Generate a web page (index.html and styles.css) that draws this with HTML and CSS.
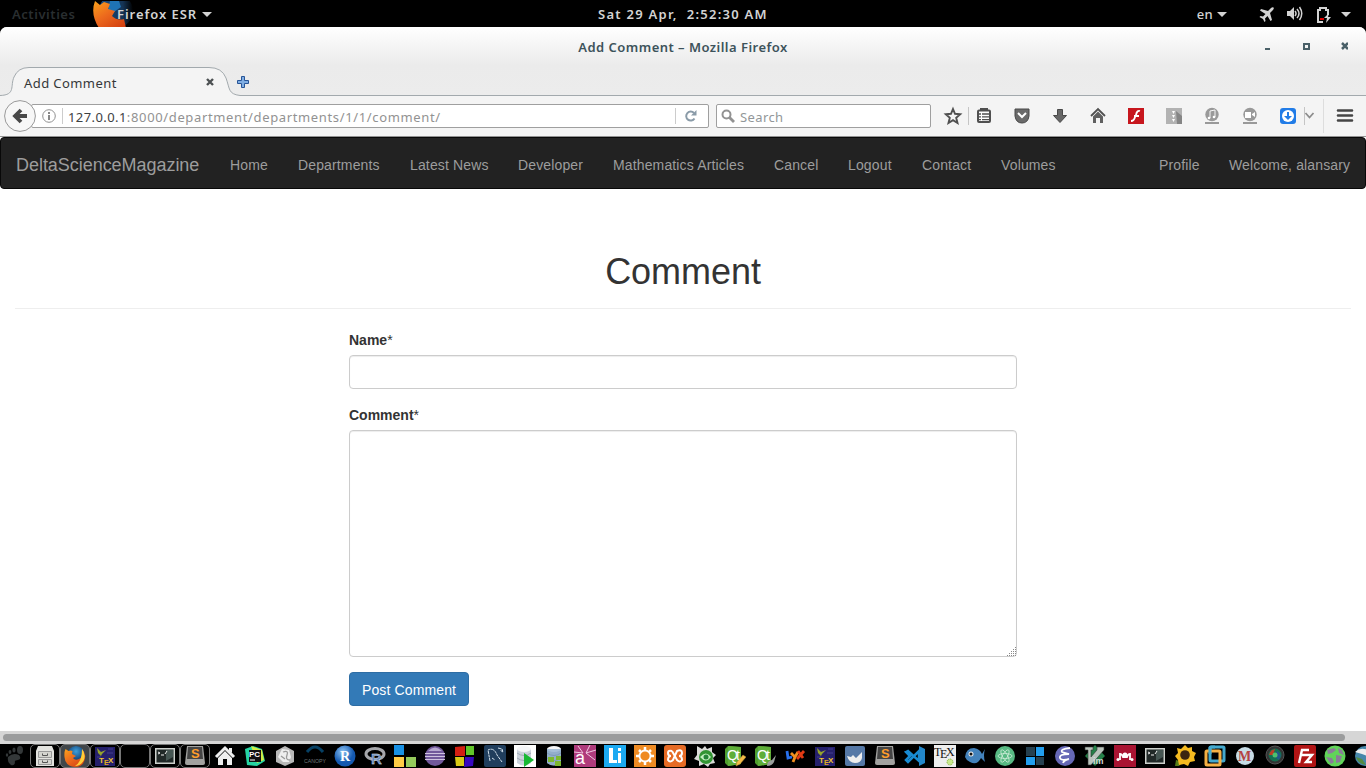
FILE: index.html
```html
<!DOCTYPE html>
<html lang="en">
<head>
<meta charset="utf-8">
<title>Add Comment</title>
<link rel="stylesheet" href="styles.css">
</head>
<body>
<svg class="defs" aria-hidden="true">
  <defs>
    <radialGradient id="ball" cx=".4" cy=".3"><stop offset="0" stop-color="#8fc5f5"/><stop offset="1" stop-color="#1459b0"/></radialGradient>
    <radialGradient id="globe" cx=".5" cy=".3"><stop offset="0" stop-color="#3d9fda"/><stop offset="1" stop-color="#123f75"/></radialGradient>
    <linearGradient id="fox" x2=".8" y2="1"><stop offset="0" stop-color="#f9a21b"/><stop offset=".5" stop-color="#ed6a1d"/><stop offset="1" stop-color="#d44212"/></linearGradient>
    <linearGradient id="fade"><stop offset="0" stop-color="#174c83"/><stop offset=".7" stop-color="#153455"/><stop offset="1" stop-color="#000"/></linearGradient>
    <symbol id="firefox" viewBox="0 0 22 22"><circle cx="12" cy="10" r="9" fill="url(#globe)"/><path d="M1.500 4l3 2q2-1 4 0L8 9l4 2-3 2q2 3 6 1 5-3 3-10 4 4 3 9-1 9-10 9Q1 21 .500 12q-.5-5 1-8z" fill="url(#fox)"/><path d="M18 4q4 5 2 11-3 6-9 6 7-4 7-17z" fill="#ffce38"/></symbol>
    <symbol id="tex" viewBox="0 0 22 22"><path fill="#25206c" d="M1 2h20v19H1z"/><path d="M3 3l4 4 5-2-4 4-1 2-3-3z" fill="#95a42c"/><path d="M14 4h5M3 12h4m6-4h6" stroke="#443d91"/><text x="5" y="18" class="glyph" font-size="8" fill="#f0c72d">T</text><text x="10" y="20" class="glyph" font-size="7" fill="#e4ad21">E</text><text x="14" y="18" class="glyph" font-size="8" fill="#f0c72d">X</text></symbol>
    <symbol id="terminal" viewBox="0 0 22 22"><path d="M1 3h20v16H1z" fill="#ccd0cc"/><path d="M2.500 4.500h17v13h-17z" fill="#202827"/><path d="M12 5h7v7l-7 4z" fill="#455552"/><path d="M4 7l2 1-2 1m3 1h3m1-1l2-3" fill="none" stroke="#eee"/></symbol>
    <symbol id="sublime" viewBox="0 0 22 22"><path d="M3 1h16l2 17q0 2-2 2H3q-2 0-2-2z" fill="#a2a2a0"/><path d="M4 2h14l1 12H3z" fill="#444"/><text x="7" y="13" class="glyph" font-size="13" fill="#ff9c2b">S</text></symbol>
    <symbol id="database" viewBox="0 0 22 22"><path d="M3 4v14q7 5 14 0V4" fill="#ccd3dc"/><ellipse cx="10" cy="4" rx="7" ry="3" fill="#f4f5f7"/><path d="M3 8q7 5 14 0M3 13q7 5 14 0" fill="none" stroke="#a0a9b5"/></symbol>
    <symbol id="qt" viewBox="0 0 22 22"><path d="M4 1l13 1v17L4 21l-3-3V4z" fill="#4f9e2d"/><path d="M4 1l13 1v17L4 21z" fill="#5fae39"/><text x="3" y="15" class="glyph thin" font-size="14" textLength="13" fill="#fff">Qt</text></symbol>
  </defs>
</svg>

<header class="desktop-bar">
  <div class="desktop-left">
    <span class="activities">Activities</span>
    <svg class="app-fox" viewBox="0 0 40 27"><circle cx="23" cy="10" r="17" fill="url(#fade)"/><path d="M17 0h9l2 6-7 5-6-2z" fill="#1f73b4"/><path d="M2 0l5 4 4-3 6 2-2 5 7 2-3 5q5 5 12 3l2 9H6Q-3 13 2 0z" fill="url(#fox)"/></svg>
    <span class="app-name">Firefox ESR</span><i class="caret"></i>
  </div>
  <div class="clock">Sat 29 Apr,&nbsp; 2:52:30 AM</div>
  <div class="desktop-right">
    <span class="lang">en</span><i class="caret"></i>
    <svg class="plane" width="16" height="16" viewBox="0 0 16 16" fill="#d3d3d3"><path d="M14.500 1.500q-1-1-3 1L9 5 2 3 1 4.500 6.500 8 4 10.500l-2.500-.5-1 1L4 13l1.500 3 1-1-.5-2.500L8.500 10l3 5L13 14l-2-7 2.500-2.500q2-2 1-3z"/></svg>
    <svg class="volume" width="17" height="16" viewBox="0 0 17 16" fill="none" stroke="#d3d3d3" stroke-width="1.500"><path d="M1 5h3l4-4v13l-4-4H1z" fill="#d3d3d3" stroke="none"/><path d="M9 5q2 2.500 0 5M11 3q4 4.500 0 9M13.500 1q4.500 6.500 0 13"/></svg>
    <svg class="battery" width="15" height="17" viewBox="0 0 15 17"><path d="M6 16H1V4h2V2h6v2h2v5" fill="none" stroke="#d3d3d3" stroke-width="2"/><path d="M3 12h4v2H3z" fill="#d00"/><path d="M12 7l-5 5h3l-1 5 5-6h-3z" fill="#d3d3d3"/></svg>
    <i class="caret"></i>
  </div>
</header>

<section class="browser">
  <div class="chrome-top">
    <div class="titlebar">
      <span class="window-title">Add Comment – Mozilla Firefox</span>
      <svg class="window-controls" width="84" height="10" viewBox="0 0 84 10"><path d="M1 6h5v2H1z" fill="#4a6068"/><path d="M40 2h5v5h-5z" fill="none" stroke="#4a6068" stroke-width="2"/><path d="M78 1l6 6m0-6l-6 6" stroke="#4a6068" stroke-width="2.500"/></svg>
    </div>
    <div class="tabs">
      <svg class="tab-shape" width="1366" height="30" viewBox="0 0 1366 30"><path d="M0 29.500C16 29 10 20 14 11Q18 1.500 29 1.500H209Q222 1.500 226 12C230 23 228 28 240 29.500V30H0z" fill="#f4f4f4"/><path d="M0 29.500C16 29 10 20 14 11Q18 1.500 29 1.500H209Q222 1.500 226 12C230 23 228 28 240 29.500H1366" fill="none" stroke="#a2a9ad"/></svg>
      <span class="tab-label">Add Comment</span>
      <svg class="tab-close" width="8" height="8" viewBox="0 0 8 8"><path d="M1 1l6 6m0-6L1 7" stroke="#4c5052" stroke-width="2.400"/></svg>
      <svg class="tab-new" width="12" height="12" viewBox="0 0 12 12"><path d="M4.500.5h3v4h4v3h-4v4h-3v-4h-4v-3h4z" fill="#80aee3" stroke="#285597"/></svg>
    </div>
  </div>

  <div class="toolbar">
    <svg class="back" width="32" height="32" viewBox="0 0 32 32"><circle cx="16" cy="16" r="15.400" fill="#f7f7f7" stroke="#999"/><path d="M17 10l-6 6 6 6M11 16h12" fill="none" stroke="#484848" stroke-width="3.800"/></svg>
    <div class="address">
      <svg width="14" height="14" viewBox="0 0 14 14"><circle cx="7" cy="7" r="6.300" fill="none" stroke="#919191"/><path d="M6 3h2v2H6zm0 3h2v5H6z" fill="#888"/></svg>
      <i class="address-rule"></i><span class="url"><b>127.0.0.1</b>:8000/department/departments/1/1/comment/</span>
      <i class="address-rule"></i><svg class="reload" width="12" height="12" viewBox="0 0 12 12"><path d="M9.500 8.500A4.500 4.500 0 1 1 9 3" fill="none" stroke="#8a9ba8" stroke-width="2"/><path d="M6 5.500h5.500V0z" fill="#8a9ba8"/></svg>
    </div>
    <div class="search"><svg width="15" height="15" viewBox="0 0 15 15"><circle cx="5.500" cy="5.500" r="4" fill="none" stroke="#929292" stroke-width="2"/><path d="M8 8l5 5" stroke="#929292" stroke-width="2.800"/></svg><span>Search</span></div>
    <svg class="tools" width="435" height="40" viewBox="0 0 435 40">
      <path d="M22 13l2 4.800 5.200.4-4 3.600 1.300 5.200-4.500-2.800-4.500 2.800 1.300-5.200-4-3.600 5.200-.4z" fill="none" stroke="#505050" stroke-width="1.900"/>
      <path d="M37.500 11v18M373.500 11v18" stroke="#c5c5c5"/><path d="M392.500 3v34" stroke="#ddd"/>
      <rect x="47" y="14.500" width="12" height="11.500" rx="1" fill="#fff" stroke="#505050" stroke-width="2"/><path d="M49 12h8v3h-8z" fill="#505050"/><path d="M48 18h2m1 0h7m-10 2.800h2m1 0h7m-10 2.800h2m1 0h7" stroke="#505050" stroke-width="1.300"/>
      <path d="M84 13h14v7q-1 7-7 7t-7-7z" fill="#6a6a6a" stroke="#484848"/><path d="M87 17l4 4 4-4" fill="none" stroke="#fff" stroke-width="2"/>
      <path d="M126.500 13.500h5v6h4l-6.500 7-6.500-7h4z" fill="#666" stroke="#484848"/>
      <path d="M160 20l7-7 7 7" fill="none" stroke="#505050" stroke-width="1.800"/><path d="M162 20.500l5-5 5 5V27h-3v-5h-4v5h-3z" fill="#606060"/>
      <path d="M197 12h16v16h-16z" fill="#c7161d"/><path d="M209 15q-3-1-4 4l-1 2q-1 4-4 4m3-5h5" fill="none" stroke="#fff" stroke-width="1.800"/>
      <path d="M235 12h16v16h-16z" fill="#b2b2b2"/><path d="M245 15l6 5v8h-5z" fill="#858585"/><path d="M241 15h3l-1.500 3zm0 4h3l-1.500 3zm0 4h3l-1.500 3z" fill="#fff"/>
      <g fill="#999"><circle cx="281" cy="18.500" r="6.700"/><circle cx="319" cy="18.500" r="6.700"/><path d="M274 26h14v2h-14zm38 0h14v2h-14z"/></g>
      <path d="M279 22v-7l5-1v7" fill="none" stroke="#f5f5f5"/><circle cx="278" cy="22" r="1.300" fill="#fff"/><circle cx="283" cy="21" r="1.300" fill="#fff"/><path d="M314 16h6v6h-6zm7 2l3-2v5l-3-2z" fill="#fff"/>
      <rect x="349" y="12" width="16" height="16" rx="3" fill="#217ce7"/><circle cx="357" cy="20" r="6" fill="#fff"/><path d="M356 16h2v4h3l-4 4-4-4h3z" fill="#217ce7"/>
      <path d="M374.500 17l4 4.500 4-4.500" fill="none" stroke="#8c8c8c" stroke-width="1.800"/>
      <path d="M407 14.500h14m-14 5h14m-14 5h14" stroke="#454545" stroke-width="2.600" stroke-linecap="round"/>
    </svg>
  </div>

  <nav class="site-nav">
    <a class="brand">DeltaScienceMagazine</a>
    <a class="home">Home</a><a class="departments">Departments</a><a class="news">Latest News</a><a class="developer">Developer</a><a class="articles">Mathematics Articles</a><a class="cancel">Cancel</a><a class="logout">Logout</a><a class="contact">Contact</a><a class="volumes">Volumes</a>
    <a class="profile">Profile</a><a class="welcome">Welcome, alansary</a>
  </nav>

  <main class="page">
    <h1>Comment</h1>
    <form class="comment-form">
      <label for="name"><span>Name</span>*</label>
      <input id="name" type="text">
      <label for="comment"><span class="comment-label">Comment</span>*</label>
      <div class="area-wrap"><textarea id="comment"></textarea><svg class="grip" width="10" height="10" viewBox="0 0 10 10"><path d="M8 0h1v1H8zM6 2h1v1H6zM8 2h1v1H8zM4 4h1v1H4zM6 4h1v1H6zM8 4h1v1H8zM2 6h1v1H2zM4 6h1v1H4zM6 6h1v1H6zM8 6h1v1H8zM0 8h1v1H0zM2 8h1v1H2zM4 8h1v1H4zM6 8h1v1H6zM8 8h1v1H8z" fill="#888"/></svg></div>
      <button type="button">Post Comment</button>
    </form>
  </main>
  <div class="scrollbar"><i></i></div>
</section>

<footer class="taskbar">
  <span><svg viewBox="0 0 22 22" fill="#343839"><path d="M4 12q5-5 11-2 3 4-1 5-4 0-3 3-1 3-4 2-4-3-3-8z"/><ellipse cx="16" cy="5" rx="3" ry="4"/><ellipse cx="10" cy="5" rx="1.600" ry="2.500"/><ellipse cx="6" cy="7" rx="1.400" ry="2"/><ellipse cx="3" cy="10" rx="1.200" ry="1.700"/></svg></span>
  <span class="running"><svg viewBox="0 0 22 22"><path d="M4 1h14l2 5v15H2V6z" fill="#e3e3df"/><path d="M4.500 6.500h13v6h-13zm0 8h13v5h-13z" fill="#d4d4cf" stroke="#999"/><path d="M8.500 8.500v2h5v-2m-5 7v2h5v-2" fill="none" stroke="#555"/></svg></span>
  <span class="running active"><svg><use href="#firefox"/></svg></span>
  <span class="running"><svg><use href="#tex"/></svg></span>
  <span class="running"></span>
  <span class="running"><svg><use href="#terminal"/></svg></span>
  <span class="running"><svg><use href="#sublime"/></svg></span>
  <span><svg viewBox="0 0 22 22"><path d="M2 12l9-9 9 9" fill="none" stroke="#eee" stroke-width="3"/><path d="M4 13l7-7 7 7v7h-5v-6H9v6H4zM15 3h3v5l-3-2z" fill="#eee"/></svg></span>
  <span><svg viewBox="0 0 22 22"><path d="M1 4l8-3 9 3 3 12-8 5-10-1z" fill="#26d4a2"/><path d="M7 1l11 4 2 10-7 3z" fill="#d4ed43"/><path d="M5 5h12v12H5z" fill="#111"/><text x="5" y="12" class="glyph" font-size="8" fill="#fff">PC</text><path d="M6 15h5" stroke="#fff"/></svg></span>
  <span><svg viewBox="0 0 22 22"><path d="M11 1l9 5v11l-9 4-9-4V6z" fill="#b8b8b8"/><path d="M8 4l7 1 2 7-2 5H9l-5-5z" fill="#eee"/><path d="M9 7q6-2 4 3t3 5M7 11l4 3" fill="none" stroke="#999" stroke-width="1.300"/></svg></span>
  <span><svg viewBox="0 0 22 22"><path d="M3 7q8-10 16 0" fill="none" stroke="#064064" stroke-width="3"/><text x="0" y="18" textLength="22" lengthAdjust="spacingAndGlyphs" class="glyph thin" font-size="6" fill="#71777a">CANOPY</text></svg></span>
  <span><svg viewBox="0 0 22 22"><circle cx="11" cy="11" r="10.500" fill="url(#ball)"/><text x="6" y="16" class="serif" font-size="14" font-weight="700" fill="#fff">R</text></svg></span>
  <span><svg viewBox="0 0 22 22"><ellipse cx="11" cy="9" rx="9" ry="5.500" fill="none" stroke="#a6a7ab" stroke-width="3"/><text x="7" y="19" class="glyph" font-size="15" fill="#6689bd" stroke="#eee" stroke-width=".3">R</text></svg></span>
  <span><svg viewBox="0 0 22 22"><path fill="#1791e5" d="M0 0h10v10H0z"/><path fill="#ffcc46" d="M0 12h10v10H0z"/><path fill="#95ca5b" d="M12 12h10v10H12z"/></svg></span>
  <span><svg viewBox="0 0 22 22"><circle cx="11" cy="11" r="10" fill="#72599b"/><path d="M1 8.500h20M1 11.500h20M1 14.500h20" stroke="#cfc2df" stroke-width="1.200"/><path d="M4 6q7-7 14 0z" fill="#b7a8d0"/></svg></span>
  <span><svg viewBox="0 0 22 22"><path d="M1 2l10-1v10H1z" fill="#d31f12"/><path d="M12 1h8v9h-8z" fill="#62c629"/><path d="M1 12h9v9H2z" fill="#d9cb16"/><path d="M11 12h9l-1 9-9 1z" fill="#3808c0"/></svg></span>
  <span><svg viewBox="0 0 22 22"><rect width="22" height="22" rx="2" fill="#203e5d"/><path d="M6 16L4 5q6-3 9 5l5 7M8 13l3 2m3-12l4 1 1 3-3-2" fill="none" stroke="#d4e2ed" stroke-dasharray="3 .6"/></svg></span>
  <span><svg viewBox="0 0 22 22"><path fill="#fff" d="M0 0h22v22H0z"/><use href="#database"/><path d="M10 8l10 7-10 7z" fill="#18b934"/></svg></span>
  <span><svg viewBox="0 0 22 22"><use href="#database"/><path d="M3 4v14q7 5 14 0V4" fill="#5989ba" opacity=".5"/><path d="M4 12h6v5H4zm7 4h6v5h-6zm1-5h5v4h-5z" fill="#7eb830"/></svg></span>
  <span><svg viewBox="0 0 22 22"><path fill="#af3b7c" d="M0 0h22v22H0z"/><text x="1" y="19" class="glyph thin" font-size="18" fill="#fff">a</text><path d="M0 7l9 1-5-7m8 7l4-8m-4 8l10-3m-10 3l9 7" fill="none" stroke="#efc8df"/></svg></span>
  <span><svg viewBox="0 0 22 22"><path fill="#1ba9f1" d="M0 0h22v22H0z"/><path d="M5 3v15h8v-3H9V3zm9 5h3v10h-3zm0-5h3v3h-3z" fill="#fff"/></svg></span>
  <span><svg viewBox="0 0 22 22"><path fill="#ef8b23" d="M0 0h22v22H0z"/><circle cx="11" cy="11" r="5.500" fill="none" stroke="#fff" stroke-width="1.800"/><path d="M11 2v3m0 12v3M2 11h3m12 0h3M5 5l2 2m8 8l2 2M5 17l2-2m8-8l2-2" stroke="#fff" stroke-width="2.500"/></svg></span>
  <span><svg viewBox="0 0 22 22"><rect width="22" height="22" rx="3" fill="#e66b25"/><path d="M8 6Q4 5 4 8q0 3 3 3-3 0-3 4 2 3 5 0l4-9q5-2 5 2 0 3-3 3 3 0 3 4-2 3-5 0L8 6" fill="none" stroke="#fff" stroke-width="2"/></svg></span>
  <span><svg viewBox="0 0 22 22"><path d="M3 1l5 3 3-3 2 3 5-2v5l4 3-3 3 2 5-5 1-2 3-4-3-5 2v-5l-5-2 3-4z" fill="#dadbd8"/><circle cx="12" cy="12" r="7" fill="#329432"/><path d="M6 12q6-7 11 0-5 7-11 0z" fill="#c1eebe"/><circle cx="12" cy="12" r="2.500" fill="#258437"/></svg></span>
  <span><svg viewBox="0 0 22 22"><use href="#qt"/><path d="M12 21l1-4 6-7 3 2-6 7z" fill="#f6bd48" stroke="#b98d39" stroke-width=".5"/></svg></span>
  <span><svg viewBox="0 0 22 22"><use href="#qt"/><path d="M13 21q0-5 5-6l4-5-2 7q-2 4-7 4z" fill="#9b9e9c"/></svg></span>
  <span><svg viewBox="0 0 22 22" fill="none" stroke-width="2.800"><path d="M3 6l1 7 4-1" stroke="#2871ee"/><path d="M7 8l4 4 3-5m-3 5l-2 5" stroke="#f28f20"/><path d="M14 6l5 7m1-7l-7 8" stroke="#e23b14"/></svg></span>
  <span><svg><use href="#tex"/></svg></span>
  <span><svg viewBox="0 0 22 22"><rect x="1" y="1" width="20" height="20" rx="2" fill="#5578a6"/><path d="M3 11l4 1 2-2 3 3 6-6v6q-1 5-7 5-6 0-8-7z" fill="#eee"/></svg></span>
  <span><svg><use href="#sublime"/></svg></span>
  <span><svg viewBox="0 0 22 22"><path d="M2 7l2-1 11 10V6L4 17l-2-2 4-4z" fill="none" stroke="#188bd3" stroke-width="2.500"/><path d="M15 1l6 3v14l-6 3z" fill="#2387ca"/></svg></span>
  <span><svg viewBox="0 0 22 22"><path fill="#eee" d="M0 0h22v22H0z"/><text x="0" y="11" class="serif" font-size="12" fill="#111">T</text><text x="6" y="13" class="serif" font-size="12" fill="#111">E</text><text x="12" y="11" class="serif" font-size="12" fill="#111">X</text><circle cx="16" cy="17" r="3" fill="#c9e88d" stroke="#77a92f" stroke-dasharray="1"/></svg></span>
  <span><svg viewBox="0 0 22 22"><path d="M1 12Q2 3 10 3q6 1 8 6l3-5q-2 6 0 13l-4-4q-4 8-11 4-4-2-5-5z" fill="#4382bb"/><circle cx="7" cy="9" r="2.500" fill="#eee"/><circle cx="7" cy="9" r="1.500" fill="#111"/></svg></span>
  <span><svg viewBox="0 0 22 22"><circle cx="11" cy="11" r="10" fill="#57b982"/><g fill="none" stroke="#d9f0df" stroke-width=".7"><ellipse cx="11" cy="11" rx="7" ry="2.500"/><ellipse cx="11" cy="11" rx="7" ry="2.500" transform="rotate(60 11 11)"/><ellipse cx="11" cy="11" rx="7" ry="2.500" transform="rotate(120 11 11)"/></g></svg></span>
  <span><svg viewBox="0 0 22 22"><path d="M2 2h9v9H2zm10 10h8v8h-8z" fill="#26404f"/><path d="M12 2h8v9h-8zM2 12h9v8H2z" fill="#229eee"/></svg></span>
  <span><svg viewBox="0 0 22 22"><circle cx="11" cy="11" r="10" fill="#6668b6"/><path d="M16 3Q6 4 8 7l7 2q-10 0-9 4 1 3 9 1-5 1-6 4" fill="none" stroke="#fff" stroke-width="1.800"/></svg></span>
  <span><svg viewBox="0 0 22 22"><path d="M11 0l10 11-10 10L1 11z" fill="#258148"/><path d="M1 2h8v3H7v7l6-7V2h7v3L7 20H4V5H1z" fill="#bac4bc" stroke="#333" stroke-width=".6"/><text x="9" y="19" class="glyph" font-size="9" fill="#d6ddd8">im</text></svg></span>
  <span><svg viewBox="0 0 22 22"><path fill="#a91432" d="M0 0h22v22H0z"/><path d="M6 15V9q2 0 3 3h4q1-3 3-3v6" fill="none" stroke="#fff" stroke-width="1.800"/><circle cx="11" cy="10" r="2.500" fill="#fff"/><circle cx="4" cy="14.500" r="1.500" fill="#fff"/><circle cx="18" cy="14.500" r="1.500" fill="#fff"/></svg></span>
  <span><svg><use href="#terminal"/></svg></span>
  <span><svg viewBox="0 0 22 22"><path d="M2 15l7 2-4 4H1z" fill="#557c17"/><path d="M11 0l3 3 4-1v4l4 2-2 4 1 4-5 1-2 4-4-2-5 1-1-5-3-4 3-3-1-5 4 1z" fill="#f5ba20"/><circle cx="11" cy="10" r="4.800" fill="#3d2510"/></svg></span>
  <span><svg viewBox="0 0 22 22" fill="none" stroke-width="3"><rect x="6" y="2" width="14" height="14" rx="1" stroke="#44a9ce"/><rect x="2" y="6" width="14" height="14" rx="1" stroke="#f5b044"/><path d="M6 9V3q0-1 2-1h3" stroke="#44a9ce"/></svg></span>
  <span><svg viewBox="0 0 22 22"><circle cx="11" cy="11" r="9" fill="#c8dce6"/><text x="4" y="16" class="serif" font-size="14" font-weight="700" fill="#b64242">M</text></svg></span>
  <span><svg viewBox="0 0 22 22"><circle cx="11" cy="10" r="9" fill="#333" stroke="#555"/><circle cx="11" cy="10" r="6.500" fill="#146f51"/><path d="M5 10q1-5 6-6l-2 6z" fill="#bb3e26"/><path d="M13 6q6 3 2 9l-4-3z" fill="#23568b"/><circle cx="11" cy="10" r="2.500" fill="#4fc06d"/></svg></span>
  <span><svg viewBox="0 0 22 22"><rect width="22" height="22" rx="2" fill="#b01414"/><path d="M5 18L8 5h7M7 10h5m0 0h6l-6 7h6" fill="none" stroke="#fff" stroke-width="2.400"/></svg></span>
  <span><svg viewBox="0 0 22 22"><circle cx="11" cy="11" r="10.500" fill="#61d458"/><path d="M3 5l7-2 2 2-4 3-4 1zm11-2l4 2 2 5-5-2zM2 12l6 1 2 4-3 2zm10-2l6 1-2 6-4 1z" fill="#8b7b99"/></svg></span>
  <span class="last"><svg viewBox="0 0 22 22"><circle cx="11" cy="11" r="10" fill="#4687aa"/><path d="M1 7q6-6 15-1l-3 5-5-2z" fill="#eee"/><path d="M2 12l6 2 4 6q-8-1-10-8z" fill="#558b42"/></svg></span>
</footer>
</body>
</html>
```

FILE: styles.css
```css
* { box-sizing: border-box; }
html, body { margin: 0; width: 1366px; height: 768px; overflow: hidden; }
body { background: #000; font-family: "Noto Sans", "Open Sans", sans-serif; display: flex; flex-direction: column; }
svg { display: block; flex: none; }
span, a, label, button { white-space: nowrap; }
.defs { position: absolute; width: 0; height: 0; }
.glyph { font-family: "Liberation Sans", sans-serif; font-weight: 700; }
.glyph.thin { font-weight: 400; }
.serif { font-family: "Liberation Serif", serif; }

.desktop-bar { height: 27px; flex: none; display: grid; grid-template-columns: 1fr 174px 1fr; color: #d3d3d3; font-size: 13px; font-weight: 600; line-height: 28px; }
.desktop-left, .desktop-right { display: flex; align-items: center; }
.activities { width: 82px; padding-left: 12px; color: #292e30; letter-spacing: .55px; }
.app-fox { width: 40px; height: 27px; margin-left: 11px; }
.app-name { width: 81px; margin-left: -16px; letter-spacing: .95px; position: relative; }
.caret { border: 5px solid transparent; border-top: 5px solid #d3d3d3; border-bottom: 0; margin-left: 4px; flex: none; }
.clock { text-align: center; white-space: nowrap; letter-spacing: 1.25px; }
.desktop-right { justify-content: flex-end; padding-right: 15px; }
.lang { font-weight: 500; letter-spacing: .3px; }
.plane { margin-left: 32px; }
.volume { margin-left: 11px; }
.battery { margin-left: 14px; }
.battery + .caret { margin-left: 9px; }

.browser { height: 717px; flex: none; display: flex; flex-direction: column; background: #fff; border-radius: 7px 7px 0 0; overflow: hidden; }
.chrome-top { height: 69px; flex: none; background: linear-gradient(#fff, #ebebeb 55%, #ececec); }
.titlebar { height: 39px; display: grid; grid-template-columns: 1fr auto 1fr; align-items: center; color: #3d535b; }
.window-title { grid-column: 2; font-size: 13px; font-weight: 600; letter-spacing: .47px; }
.window-controls { justify-self: end; margin-right: 18px; }
.tabs { height: 30px; display: flex; align-items: center; position: relative; padding-left: 24px; font-size: 13px; color: #343839; }
.tab-shape { position: absolute; left: 0; top: 0; }
.tab-label, .tab-close, .tab-new { position: relative; }
.tab-label { width: 182px; padding-top: 3px; letter-spacing: .42px; }
.tab-close, .tab-new { margin-top: 1px; }
.tab-new { margin-left: 23px; }

.toolbar { height: 41px; flex: none; display: flex; align-items: center; background: #f4f4f4; border-bottom: 1px solid #929292; padding-left: 4px; }
.back { position: relative; z-index: 1; }
.address, .search { height: 24px; background: #fff; border: 1px solid #9f9f9f; border-radius: 2px; display: flex; align-items: center; font-size: 13px; }
.address { width: 678px; margin-left: -5px; padding-left: 10px; }
.address-rule { width: 1px; height: 16px; background: #ccc; margin-left: 6px; }
.url { width: 606px; padding-left: 5px; color: #929292; letter-spacing: .64px; padding-top: 1px; }
.url b { color: #3d4143; font-weight: 400; letter-spacing: .42px; }
.reload { margin-left: 9px; }
.search { width: 215px; margin-left: 7px; padding-left: 4px; color: #929799; }
.search span { margin-left: 4px; letter-spacing: .4px; padding-top: 1px; }

.site-nav { height: 52px; flex: none; display: flex; align-items: center; background: #222; border: 1px solid #080808; border-radius: 4px; color: #9d9d9d; font: 14px/20px "Liberation Sans", Arial, sans-serif; padding: 4px 0 0 15px; letter-spacing: .14px; }
.site-nav a { margin-right: 30px; flex: none; }
.brand { width: 184px; font-size: 18px; letter-spacing: -.04px; }
.home { width: 38px; }
.departments { width: 82px; }
.news { width: 78px; }
.developer { width: 65px; }
.articles { width: 131px; }
.cancel { width: 44px; }
.logout { width: 44px; }
.contact { width: 49px; }
.volumes { width: 54px; }
.site-nav .profile { width: 40px; margin-left: 74px; }
.site-nav .welcome { margin-right: 0; }

.page { height: 542px; flex: none; padding: 63px 15px 0; color: #333; font-family: "Liberation Sans", Arial, sans-serif; font-size: 14px; }
h1 { margin: 0; height: 57px; border-bottom: 1px solid #eee; text-align: center; font-size: 36px; line-height: 40px; font-weight: 400; letter-spacing: -.05px; }
.comment-form { width: 668px; margin: 21px 0 0 334px; display: flex; flex-direction: column; align-items: flex-start; line-height: 20px; }
label { height: 20px; margin-bottom: 5px; }
label span { font-weight: 700; }
input, textarea { display: block; width: 668px; border: 1px solid #ccc; border-radius: 4px; box-shadow: inset 0 1px 1px rgba(0,0,0,.075); background: #fff; }
input { height: 34px; margin-bottom: 16px; }
.area-wrap { position: relative; margin-bottom: 15px; }
textarea { height: 227px; resize: none; }
.grip { position: absolute; right: 0; bottom: 0; }
button { width: 120px; height: 34px; padding: 2px 0 0; border: 1px solid #2e6da4; border-radius: 4px; background: #337ab7; color: #fff; font: 14px/20px "Liberation Sans", Arial, sans-serif; letter-spacing: .13px; }
.scrollbar { height: 13px; flex: none; background: #d6d6d6; padding: 3px; }
.scrollbar i { display: block; width: 1342px; height: 7px; border-radius: 4px; background: #9b9c9d; }

.taskbar { height: 24px; flex: none; display: flex; }
.taskbar > span { width: 30px; height: 24px; flex: none; display: flex; align-items: center; justify-content: center; }
.taskbar svg { width: 22px; height: 22px; }
.taskbar .running { border: 1px solid #777; border-radius: 5px; }
.taskbar .active { background: #41464a; }
```
